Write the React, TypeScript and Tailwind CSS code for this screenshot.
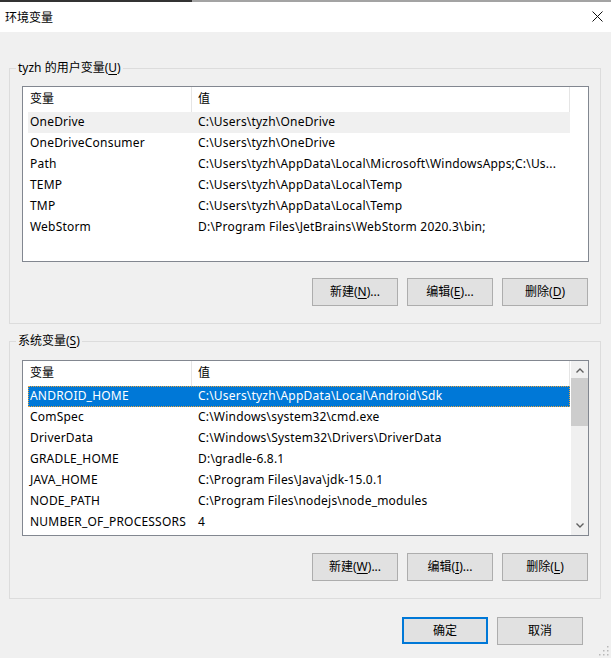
import React from "react";

type Row = [string, string];

const userVars: Row[] = [
  ["OneDrive", "C:\\Users\\tyzh\\OneDrive"],
  ["OneDriveConsumer", "C:\\Users\\tyzh\\OneDrive"],
  ["Path", "C:\\Users\\tyzh\\AppData\\Local\\Microsoft\\WindowsApps;C:\\Us..."],
  ["TEMP", "C:\\Users\\tyzh\\AppData\\Local\\Temp"],
  ["TMP", "C:\\Users\\tyzh\\AppData\\Local\\Temp"],
  ["WebStorm", "D:\\Program Files\\JetBrains\\WebStorm 2020.3\\bin;"],
];

const sysVars: Row[] = [
  ["ANDROID_HOME", "C:\\Users\\tyzh\\AppData\\Local\\Android\\Sdk"],
  ["ComSpec", "C:\\Windows\\system32\\cmd.exe"],
  ["DriverData", "C:\\Windows\\System32\\Drivers\\DriverData"],
  ["GRADLE_HOME", "D:\\gradle-6.8.1"],
  ["JAVA_HOME", "C:\\Program Files\\Java\\jdk-15.0.1"],
  ["NODE_PATH", "C:\\Program Files\\nodejs\\node_modules"],
  ["NUMBER_OF_PROCESSORS", "4"],
];

function Mn({ label, k, tail = "" }: { label: string; k: string; tail?: string }) {
  return (
    <>
      {label}(<span className="underline underline-offset-[2px]">{k}</span>){tail}
    </>
  );
}

function Btn({ children, primary }: { children: React.ReactNode; primary?: boolean }) {
  return (
    <button
      className={
        primary
          ? "flex h-[27px] w-[86px] items-center justify-center border-2 border-[#0078d7] bg-[#e1e1e1] text-[12px] text-black"
          : "flex h-[28px] w-[86px] items-center justify-center border border-[#adadad] bg-[#e1e1e1] text-[12px] text-black"
      }
    >
      {children}
    </button>
  );
}

function Chevron({ down }: { down?: boolean }) {
  return (
    <svg width="8" height="5" viewBox="0 0 8 5" className={down ? "rotate-180" : ""}>
      <path d="M0.5 4.5 L4 1 L7.5 4.5" fill="none" stroke="#606060" strokeWidth="1.4" />
    </svg>
  );
}

function Scrollbar() {
  return (
    <div className="ml-[1px] flex w-[17px] flex-col bg-[#f0f0f0]">
      <div className="flex h-[17px] items-center justify-center pt-[1px]">
        <Chevron />
      </div>
      <div className="h-[48px] bg-[#cdcdcd]" />
      <div className="flex-1" />
      <div className="flex h-[17px] items-center justify-center pb-[2px]">
        <Chevron down />
      </div>
    </div>
  );
}

function VarList({
  rows,
  mode,
  scroll,
  className,
}: {
  rows: Row[];
  mode: "hover" | "selected";
  scroll?: boolean;
  className: string;
}) {
  return (
    <div className={`ml-[12px] flex h-[176px] w-[567px] border border-[#828790] bg-white ${className}`}>
      <div className="flex w-[548px] flex-col">
        <div className="flex h-[25px] items-center text-[12px]">
          <div className="flex h-full w-[169px] items-center border-r border-[#e5e5e5] pb-[1px] pl-[7px]">变量</div>
          <div className="flex h-full w-[378px] items-center border-r border-[#e5e5e5] pb-[1px] pl-[6px]">值</div>
        </div>
        {rows.map(([name, value], i) => {
          const state =
            i === 0
              ? mode === "hover"
                ? "bg-[#f0f0f0] text-black"
                : "bg-[#0078d7] text-white outline-1 outline-dotted outline-[#e8a33c] -outline-offset-1"
              : "text-black";
          return (
            <div
              key={name}
              className={`ml-[5px] flex h-[21px] w-[542px] items-center pb-[1px] text-[12px] tracking-[0.2px] ${state}`}
            >
              <div className="w-[163px] overflow-hidden whitespace-nowrap pl-[2px]">{name}</div>
              <div className="flex-1 overflow-hidden whitespace-nowrap pl-[7px]">{value}</div>
            </div>
          );
        })}
      </div>
      {scroll && <Scrollbar />}
    </div>
  );
}

export default function App() {
  return (
    <div className="relative flex h-[658px] w-[611px] flex-col overflow-hidden bg-[#f0f0f0] font-['Noto_Sans','Noto_Sans_CJK_SC',sans-serif] text-black">
      {/* Title bar */}
      <div className="flex h-[32px] flex-col bg-white">
        <div className="flex h-[2px]">
          <div className="w-[192px] bg-[#333333]" />
          <div className="flex-1 bg-[#a3a3a3]" />
        </div>
        <div className="flex flex-1 items-center justify-between pl-[5px] pr-[8px]">
          <span className="pt-[1px] text-[12px]">环境变量</span>
          <svg width="11" height="11" viewBox="0 0 11 11" className="mb-[2px]">
            <path d="M0.5 0.5 L10.5 10.5 M10.5 0.5 L0.5 10.5" stroke="#111" strokeWidth="1" />
          </svg>
        </div>
      </div>

      {/* User variables */}
      <fieldset className="ml-[9px] mt-[28px] w-[592px] border border-[#dcdcdc] pb-[17px]">
        <legend className="ml-[6px] px-[2px] text-[12px] leading-[16px]">
          tyzh 的用户变量(<span className="underline underline-offset-[2px]">U</span>)
        </legend>
        <VarList rows={userVars} mode="hover" className="mt-[10px] h-[175px]" />
        <div className="mt-[16px] flex justify-end gap-[9px] pr-[12px]">
          <Btn>
            <Mn label="新建" k="N" tail="..." />
          </Btn>
          <Btn>
            <Mn label="编辑" k="E" tail="..." />
          </Btn>
          <Btn>
            <Mn label="删除" k="D" />
          </Btn>
        </div>
      </fieldset>

      {/* System variables */}
      <fieldset className="ml-[9px] mt-[9px] w-[592px] border border-[#dcdcdc] pb-[17px]">
        <legend className="ml-[6px] px-[2px] text-[12px] leading-[16px]">
          系统变量(<span className="underline underline-offset-[2px]">S</span>)
        </legend>
        <VarList rows={sysVars} mode="selected" scroll className="mt-[11px]" />
        <div className="mt-[17px] flex justify-end gap-[9px] pr-[12px]">
          <Btn>
            <Mn label="新建" k="W" tail="..." />
          </Btn>
          <Btn>
            <Mn label="编辑" k="I" tail="..." />
          </Btn>
          <Btn>
            <Mn label="删除" k="L" />
          </Btn>
        </div>
      </fieldset>

      {/* Dialog buttons */}
      <div className="mt-[18px] flex justify-end gap-[9px] pr-[28px]">
        <Btn primary>确定</Btn>
        <Btn>取消</Btn>
      </div>

      {/* Resize grip */}
      <svg className="absolute bottom-[2px] right-[2px]" width="11" height="11" viewBox="0 0 11 11">
        {[
          [9, 1],
          [9, 5],
          [5, 5],
          [9, 9],
          [5, 9],
          [1, 9],
        ].map(([x, y]) => (
          <rect key={`${x}-${y}`} x={x} y={y} width="1.5" height="1.5" fill="#b8b8b8" />
        ))}
      </svg>
    </div>
  );
}
